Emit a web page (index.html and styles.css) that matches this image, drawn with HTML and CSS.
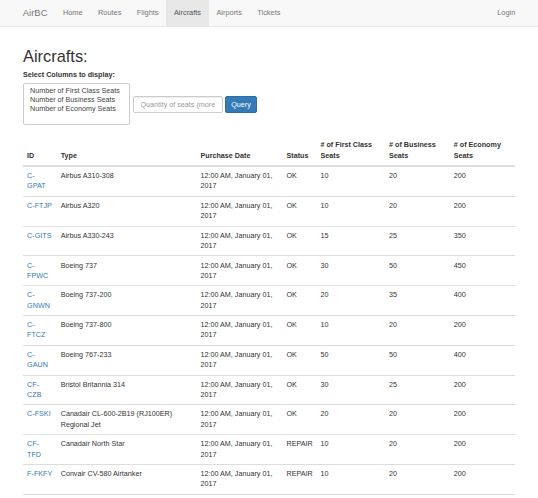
FILE: index.html
```html
<!DOCTYPE html>
<html lang="en">
<head>
<meta charset="utf-8">
<title>AirBC - Aircrafts</title>
<link rel="stylesheet" href="styles.css">
</head>
<body>
<nav class="navbar">
  <div class="nav-left">
    <a class="brand" href="#">AirBC</a>
    <ul class="nav-links">
      <li><a href="#">Home</a></li>
      <li><a href="#">Routes</a></li>
      <li><a href="#">Flights</a></li>
      <li class="active"><a href="#">Aircrafts</a></li>
      <li><a href="#">Airports</a></li>
      <li><a href="#">Tickets</a></li>
    </ul>
  </div>
  <ul class="nav-links">
    <li><a href="#">Login</a></li>
  </ul>
</nav>

<main class="container">
  <h1 class="title">Aircrafts:</h1>
  <form class="query-form">
    <label class="form-label" for="cols">Select Columns to display:</label>
    <div class="form-row">
      <select id="cols" class="col-select" multiple size="4">
        <option>Number of First Class Seats</option>
        <option>Number of Business Seats</option>
        <option>Number of Economy Seats</option>
      </select>
      <input class="text-input" type="text" placeholder="Quantity of seats (more than)">
      <button class="btn" type="button">Query</button>
    </div>
  </form>

  <table class="data-table">
    <colgroup>
      <col class="c-id"><col class="c-type"><col class="c-date"><col class="c-status"><col class="c-first"><col class="c-bus"><col class="c-eco">
    </colgroup>
    <thead>
      <tr>
        <th>ID</th><th>Type</th><th>Purchase Date</th><th>Status</th><th># of First Class Seats</th><th># of Business Seats</th><th># of Economy Seats</th>
      </tr>
    </thead>
    <tbody>
      <tr><td><a href="#">C-GPAT</a></td><td>Airbus A310-308</td><td>12:00 AM, January 01, 2017</td><td>OK</td><td>10</td><td>20</td><td>200</td></tr>
      <tr><td><a href="#">C-FTJP</a></td><td>Airbus A320</td><td>12:00 AM, January 01, 2017</td><td>OK</td><td>10</td><td>20</td><td>200</td></tr>
      <tr><td><a href="#">C-GITS</a></td><td>Airbus A330-243</td><td>12:00 AM, January 01, 2017</td><td>OK</td><td>15</td><td>25</td><td>350</td></tr>
      <tr><td><a href="#">C-FPWC</a></td><td>Boeing 737</td><td>12:00 AM, January 01, 2017</td><td>OK</td><td>30</td><td>50</td><td>450</td></tr>
      <tr><td><a href="#">C-GNWN</a></td><td>Boeing 737-200</td><td>12:00 AM, January 01, 2017</td><td>OK</td><td>20</td><td>35</td><td>400</td></tr>
      <tr><td><a href="#">C-FTCZ</a></td><td>Boeing 737-800</td><td>12:00 AM, January 01, 2017</td><td>OK</td><td>10</td><td>20</td><td>200</td></tr>
      <tr><td><a href="#">C-GAUN</a></td><td>Boeing 767-233</td><td>12:00 AM, January 01, 2017</td><td>OK</td><td>50</td><td>50</td><td>400</td></tr>
      <tr><td><a href="#">CF-CZB</a></td><td>Bristol Britannia 314</td><td>12:00 AM, January 01, 2017</td><td>OK</td><td>30</td><td>25</td><td>200</td></tr>
      <tr><td><a href="#">C-FSKI</a></td><td>Canadair CL-600-2B19 (RJ100ER) Regional Jet</td><td>12:00 AM, January 01, 2017</td><td>OK</td><td>20</td><td>20</td><td>200</td></tr>
      <tr><td><a href="#">CF-TFD</a></td><td>Canadair North Star</td><td>12:00 AM, January 01, 2017</td><td>REPAIR</td><td>10</td><td>20</td><td>200</td></tr>
      <tr><td><a href="#">F-FKFY</a></td><td>Convair CV-580 Airtanker</td><td>12:00 AM, January 01, 2017</td><td>REPAIR</td><td>10</td><td>20</td><td>200</td></tr>
    </tbody>
  </table>
</main>
</body>
</html>
```
FILE: styles.css
```css
html {
  overflow: hidden;
}
body {
  margin: 0;
  font-family: "Liberation Sans", Arial, Helvetica, sans-serif;
  font-size: 7.2px;
  line-height: 10.3px;
  color: #333;
  background: #fff;
}
a {
  color: #337ab7;
  text-decoration: none;
}

/* Navbar */
.navbar {
  display: flex;
  justify-content: space-between;
  align-items: stretch;
  height: 26px;
  padding: 0 15px;
  background: #f8f8f8;
  border-bottom: 1px solid #e7e7e7;
}
.nav-left {
  display: flex;
  align-items: stretch;
}
.brand {
  display: flex;
  align-items: center;
  padding: 0 7.7px;
  font-size: 9.5px;
  color: #777;
}
.nav-links {
  display: flex;
  margin: 0;
  padding: 0;
  list-style: none;
}
.nav-links li {
  display: flex;
}
.nav-links a {
  display: flex;
  align-items: center;
  padding: 0 7.7px;
  font-size: 7.4px;
  color: #777;
}
.nav-links .active a {
  background: #e7e7e7;
  color: #555;
}

/* Content */
.container {
  padding: 0 23px;
}
.title {
  margin: 20px 0 5px;
  font-size: 16.4px;
  line-height: 18px;
  font-weight: normal;
  color: #333;
}
.query-form {
  display: flex;
  flex-direction: column;
  gap: 3px;
}
.form-label {
  font-weight: bold;
}
.form-row {
  display: flex;
  align-items: center;
  gap: 2.5px;
}
.col-select {
  width: 107px;
  height: 42px;
  padding: 2px 6px;
  box-sizing: border-box;
  border: 1px solid #ccc;
  border-radius: 2px;
  font-family: "Liberation Sans", Arial, sans-serif;
  font-size: 7.2px;
  color: #444;
  background: #fff;
  overflow: hidden;
}
.col-select option {
  padding: 0;
  line-height: 9.2px;
  min-height: 0;
}
.text-input {
  width: 90px;
  height: 17px;
  box-sizing: border-box;
  padding: 0 7px;
  border: 1px solid #ccc;
  border-radius: 2px;
  font-family: "Liberation Sans", Arial, sans-serif;
  font-size: 7.2px;
  color: #555;
  box-shadow: inset 0 1px 1px rgba(0,0,0,.075);
}
.text-input::placeholder {
  color: #999;
}
.btn {
  width: 32px;
  height: 17px;
  padding: 0;
  border: 1px solid #2e6da4;
  border-radius: 2px;
  background: #337ab7;
  color: #fff;
  font-family: "Liberation Sans", Arial, sans-serif;
  font-size: 7.2px;
}

/* Table */
.data-table {
  width: 492px;
  margin-top: 11px;
  border-collapse: collapse;
  table-layout: fixed;
}
.c-id { width: 33.6px; }
.c-type { width: 139.8px; }
.c-date { width: 86px; }
.c-status { width: 34px; }
.c-first { width: 68.6px; }
.c-bus { width: 64.7px; }
.c-eco { width: 65.3px; }
.data-table th,
.data-table td {
  padding: 4.1px 4.1px;
  text-align: left;
  vertical-align: top;
  border-top: 1px solid #ddd;
}
.data-table thead th {
  vertical-align: bottom;
  border-top: 0;
  border-bottom: 2px solid #ddd;
  font-weight: bold;
}
.data-table tbody tr:first-child td {
  border-top: 0;
}
.data-table tbody tr:last-child td {
  border-bottom: 1px solid #ddd;
}
```
